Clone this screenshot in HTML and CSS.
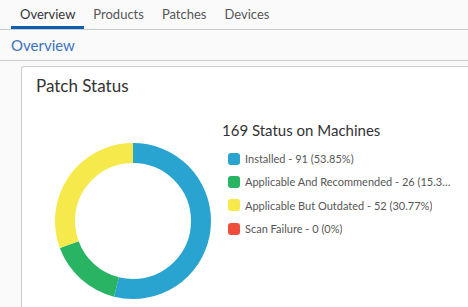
FILE: index.html
```html
<!DOCTYPE html>
<html lang="en">
<head>
    <meta charset="UTF-8">
    <title>Patch Status</title>
    <link rel="stylesheet" href="styles.css">
</head>
<body>
    <nav class="tabs">
        <a class="tab active">Overview</a>
        <a class="tab">Products</a>
        <a class="tab">Patches</a>
        <a class="tab">Devices</a>
    </nav>
    <div class="subheader">Overview</div>
    <main class="content">
        <section class="card">
            <h2 class="card-title">Patch Status</h2>
            <div class="card-body">
                <svg class="donut" width="160" height="160" viewBox="0 0 160 160">
                    <g transform="rotate(-90 80 80)" fill="none" stroke-width="20">
                        <circle cx="80" cy="80" r="68" stroke="#29a4d1" stroke-dasharray="230.08 427.26" stroke-dashoffset="0"/>
                        <circle cx="80" cy="80" r="68" stroke="#28b463" stroke-dasharray="65.72 427.26" stroke-dashoffset="-230.08"/>
                        <circle cx="80" cy="80" r="68" stroke="#f5e94b" stroke-dasharray="131.47 427.26" stroke-dashoffset="-295.80"/>
                    </g>
                </svg>
                <div class="legend">
                    <h3 class="legend-title">169 Status on Machines</h3>
                    <ul class="legend-list">
                        <li><span class="swatch installed"></span><span class="label">Installed - 91 (53.85%)</span></li>
                        <li><span class="swatch recommended"></span><span class="label">Applicable And Recommended - 26 (15.38%)</span></li>
                        <li><span class="swatch outdated"></span><span class="label">Applicable But Outdated - 52 (30.77%)</span></li>
                        <li><span class="swatch failure"></span><span class="label">Scan Failure - 0 (0%)</span></li>
                    </ul>
                </div>
            </div>
        </section>
    </main>
</body>
</html>
```

FILE: styles.css
```css
html, body {
    height: 100%;
}

body {
    margin: 0;
    display: flex;
    flex-direction: column;
    font-family: Lato, "Open Sans", sans-serif;
    background-color: #fafafa;
    color: #565656;
    overflow: hidden;
}

.tabs {
    display: flex;
    height: 29px;
    padding-left: 11px;
    border-bottom: 1px solid #ccc;
}

.tab {
    padding: 6px 9px 0;
    font-size: 13px;
    color: #565656;
    box-sizing: border-box;
    border-bottom: 3px solid transparent;
}

.tab.active {
    color: #333;
    border-bottom-color: #0b5fb4;
}

.subheader {
    height: 31px;
    box-sizing: border-box;
    padding: 6px 0 0 11px;
    font-size: 15px;
    color: #3a72c0;
    border-bottom: 1px solid #ccc;
}

.content {
    flex: 1;
    min-height: 0;
    display: flex;
    padding: 5px 0 0 21px;
}

.card {
    flex: 1;
    min-width: 0;
    background-color: #fff;
    border: 1px solid #ccc;
    border-right: none;
    border-bottom: none;
    border-radius: 3px 0 0 0;
}

.card-title {
    margin: 0;
    padding: 8px 0 0 14px;
    font-size: 17px;
    font-weight: normal;
    color: #333;
}

.card-body {
    display: flex;
    padding: 0 0 0 31px;
}

.donut {
    flex: none;
    margin-top: 45px;
}

.legend {
    margin-left: 9px;
    margin-top: 25px;
    width: 233px;
}

.legend-title {
    margin: 0 0 8px;
    font-size: 15px;
    font-weight: normal;
    color: #333;
}

.legend-list {
    list-style: none;
    margin: 0;
    padding: 0 0 0 6px;
}

.legend-list li {
    display: flex;
    align-items: center;
    height: 23.3px;
}

.swatch {
    flex: none;
    width: 12px;
    height: 12px;
    border-radius: 3px;
    margin-right: 5px;
}

.swatch.installed { background-color: #29a4d1; }
.swatch.recommended { background-color: #28b463; }
.swatch.outdated { background-color: #f5e94b; }
.swatch.failure { background-color: #ef4d3b; }

.label {
    font-size: 11px;
    white-space: nowrap;
    overflow: hidden;
    text-overflow: ellipsis;
}
```
